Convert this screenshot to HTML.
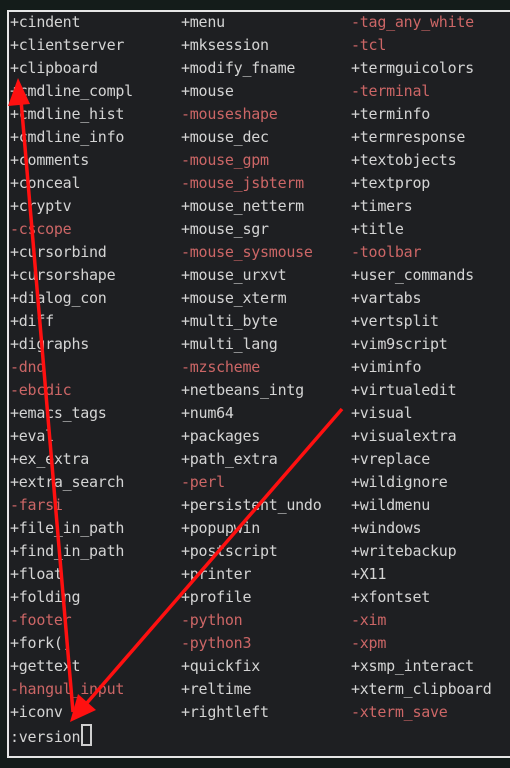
<!DOCTYPE html>
<html><head><style>
html,body{margin:0;padding:0;width:510px;height:768px;overflow:hidden;background:#141c1a;}
#box{position:absolute;left:7px;top:10px;width:520px;height:744px;border:2px solid #e6e6e6;background:#1e1f22;}
.c{position:absolute;top:-1px;font-family:"DejaVu Sans Mono","Liberation Mono",monospace;font-size:15px;letter-spacing:-0.25px;line-height:23px;color:#d4d4d4;white-space:pre;}
.r{color:#cc6666;}
</style></head><body>
<div id="box">
<div class="c" style="left:1px">+cindent
+clientserver
+clipboard
+cmdline_compl
+cmdline_hist
+cmdline_info
+comments
+conceal
+cryptv
<span class="r">-cscope</span>
+cursorbind
+cursorshape
+dialog_con
+diff
+digraphs
<span class="r">-dnd</span>
<span class="r">-ebcdic</span>
+emacs_tags
+eval
+ex_extra
+extra_search
<span class="r">-farsi</span>
+file_in_path
+find_in_path
+float
+folding
<span class="r">-footer</span>
+fork()
+gettext
<span class="r">-hangul_input</span>
+iconv
:version<span style="display:inline-block;width:7px;height:18px;border:2px solid #cfcfcf;vertical-align:-4px;margin-left:1px"></span></div>
<div class="c" style="left:172px">+menu
+mksession
+modify_fname
+mouse
<span class="r">-mouseshape</span>
+mouse_dec
<span class="r">-mouse_gpm</span>
<span class="r">-mouse_jsbterm</span>
+mouse_netterm
+mouse_sgr
<span class="r">-mouse_sysmouse</span>
+mouse_urxvt
+mouse_xterm
+multi_byte
+multi_lang
<span class="r">-mzscheme</span>
+netbeans_intg
+num64
+packages
+path_extra
<span class="r">-perl</span>
+persistent_undo
+popupwin
+postscript
+printer
+profile
<span class="r">-python</span>
<span class="r">-python3</span>
+quickfix
+reltime
+rightleft</div>
<div class="c" style="left:342px"><span class="r">-tag_any_white</span>
<span class="r">-tcl</span>
+termguicolors
<span class="r">-terminal</span>
+terminfo
+termresponse
+textobjects
+textprop
+timers
+title
<span class="r">-toolbar</span>
+user_commands
+vartabs
+vertsplit
+vim9script
+viminfo
+virtualedit
+visual
+visualextra
+vreplace
+wildignore
+wildmenu
+windows
+writebackup
+X11
+xfontset
<span class="r">-xim</span>
<span class="r">-xpm</span>
+xsmp_interact
+xterm_clipboard
<span class="r">-xterm_save</span></div>
</div>
<svg width="510" height="768" style="position:absolute;left:0;top:0">
<line x1="73" y1="712" x2="21" y2="100" stroke="#ff1010" stroke-width="3.5"/>
<polygon points="18,78 8,106 30,104" fill="#ff1010"/>
<line x1="342" y1="409" x2="86" y2="704" stroke="#ff1010" stroke-width="3.5"/>
<polygon points="70,722 78,694 96,710" fill="#ff1010"/>
</svg>
</body></html>
